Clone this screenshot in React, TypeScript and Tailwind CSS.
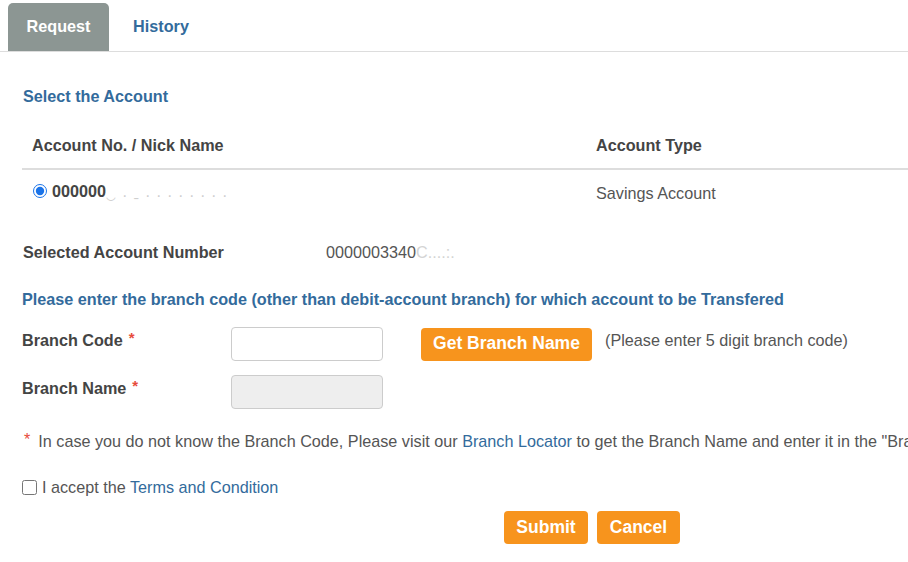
import React from 'react'

const orangeBtn =
  'rounded bg-[#f7941d] font-bold text-white leading-none flex items-center justify-center'

export default function App() {
  return (
    <div className="w-[908px] h-[562px] overflow-hidden bg-white font-['Liberation_Sans',Arial,sans-serif] text-[16.2px] text-[#444]">
      {/* Tabs */}
      <div className="flex items-end h-[52px] border-b border-[#dddddd]">
        <div className="ml-2 mt-[3px] w-[101px] h-[48px] pb-[2px] rounded-t-[5px] bg-[#8c9693] text-white font-bold flex items-center justify-center">
          Request
        </div>
        <div className="w-[104px] h-[48px] pb-[2px] text-[#336b9c] font-bold flex items-center justify-center">
          History
        </div>
      </div>

      <div className="text-[#336b9c] font-bold ml-[23px] mt-[35px] leading-[18px]">Select the Account</div>

      {/* Account table */}
      <div className="ml-[22px] mt-[18px]">
        <div className="flex h-[47px] items-center border-b-2 border-[#dddddd] font-bold">
          <div className="w-[574px] pl-[10px]">Account No. / Nick Name</div>
          <div>Account Type</div>
        </div>
        <div className="flex h-[46px] items-center">
          <div className="w-[574px] pl-[11px] flex items-center -mt-[4px]">
            <input type="radio" defaultChecked className="w-[14px] h-[14px] m-0 accent-[#1a73e8]" />
            <span className="ml-[5px] font-bold">
              000000<span className="text-[#cfcfcf] font-normal tracking-[1px]">‿ . ˍ . . . . . . . .</span>
            </span>
          </div>
          <div className="text-[#555]">Savings Account</div>
        </div>
      </div>

      <div className="flex ml-[23px] mt-[22px] h-[28px] items-center">
        <div className="w-[303px] font-bold">Selected Account Number</div>
        <div className="text-[#555]">
          0000003340<span className="text-[#d4d4d4]">C....:.</span>
        </div>
      </div>

      <div className="ml-[22px] mt-[24px] leading-[18px] text-[#336b9c] font-bold">
        Please enter the branch code (other than debit-account branch) for which account to be Transfered
      </div>

      {/* Branch form */}
      <div className="ml-[22px] mt-[19px] flex flex-col gap-[14px]">
        <div className="flex items-center h-[34px]">
          <div className="w-[209px] font-bold -mt-[8px]">
            Branch Code<span className="ml-[6px] relative -top-[3px] text-[#e74c3c] text-[15px]">*</span>
          </div>
          <input className="w-[152px] h-[34px] rounded border border-[#cccccc] bg-white" />
          <button className={`${orangeBtn} ml-[38px] w-[171px] h-[33px] text-[17.5px]`}>Get Branch Name</button>
          <div className="ml-[13px] -mt-[7px] text-[#555]">(Please enter 5 digit branch code)</div>
        </div>
        <div className="flex items-center h-[34px]">
          <div className="w-[209px] font-bold -mt-[8px]">
            Branch Name<span className="ml-[6px] relative -top-[3px] text-[#e74c3c] text-[15px]">*</span>
          </div>
          <input disabled className="w-[152px] h-[34px] rounded border border-[#cccccc] bg-[#eeeeee]" />
        </div>
      </div>

      {/* Note, runs past the right edge as in the page */}
      <div className="ml-[24px] mt-[23px] leading-[18px] whitespace-nowrap flex items-center">
        <span className="text-[#e74c3c] -mt-[4px]">*</span>
        <span className="ml-[8px] text-[#555]">
          In case you do not know the Branch Code, Please visit our{' '}
          <span className="text-[#336b9c]">Branch Locator</span> to get the Branch Name and enter it in the "Branch Name" field
        </span>
      </div>

      <div className="ml-[22px] mt-[28px] leading-[18px] flex items-center whitespace-nowrap">
        <input type="checkbox" className="w-[15px] h-[15px] m-0" />
        <span className="ml-[5px] text-[#555]">
          I accept the <span className="text-[#336b9c]">Terms and Condition</span>
        </span>
      </div>

      <div className="mt-[15px] flex gap-[9px] pl-[504px]">
        <button className={`${orangeBtn} w-[84px] h-[33px] text-[17.5px]`}>Submit</button>
        <button className={`${orangeBtn} w-[83px] h-[33px] text-[17.5px]`}>Cancel</button>
      </div>
    </div>
  )
}
